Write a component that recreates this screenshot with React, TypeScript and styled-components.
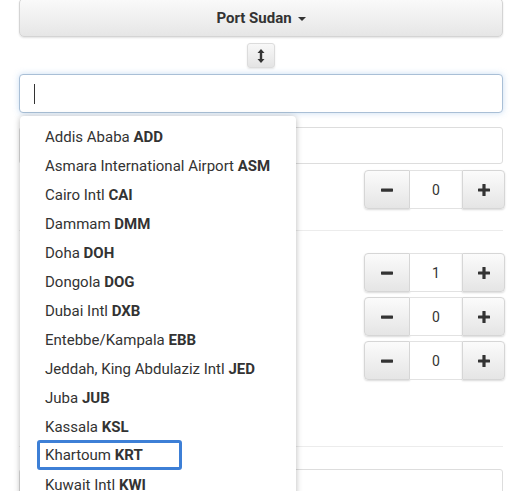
import styled, { createGlobalStyle } from "styled-components";

const GlobalStyle = createGlobalStyle`
  html, body {
    margin: 0;
    padding: 0;
    background: #fff;
    font-family: Roboto, "Liberation Sans", Arial, sans-serif;
    color: #333;
  }
  * { box-sizing: border-box; }
`;

const Page = styled.div`
  position: relative;
  width: 527px;
  height: 491px;
  overflow: hidden;
  padding: 0 24px 0 19px;
`;

const CityButton = styled.button`
  display: flex;
  align-items: center;
  justify-content: center;
  gap: 6px;
  width: 100%;
  height: 39px;
  margin-top: -2px;
  border: 1px solid #d4d4d4;
  border-radius: 5px;
  background: linear-gradient(#fafafa, #e6e6e6);
  box-shadow: 0 1px 2px rgba(0, 0, 0, 0.12);
  font-family: inherit;
  font-size: 15px;
  font-weight: 700;
  color: #333;
`;

const Caret = styled.span`
  width: 0;
  height: 0;
  border-left: 4px solid transparent;
  border-right: 4px solid transparent;
  border-top: 4px solid #333;
  margin-top: 2px;
`;

const SwapRow = styled.div`
  display: flex;
  justify-content: center;
  padding: 6px 0 6px;
`;

const SwapButton = styled.button`
  width: 28px;
  height: 25px;
  display: flex;
  align-items: center;
  justify-content: center;
  padding: 0;
  border: 1px solid #dcdcdc;
  border-radius: 3px;
  background: linear-gradient(#f8f8f8, #e4e4e4);
  box-shadow: 0 1px 2px rgba(0, 0, 0, 0.1);
`;

const SearchBox = styled.div`
  height: 39px;
  border: 1px solid #a9bfd6;
  border-radius: 4px;
  background: #fff;
  box-shadow: 0 0 6px rgba(102, 160, 220, 0.35);
  display: flex;
  align-items: center;
  padding-left: 14px;
`;

const TextCaret = styled.span`
  width: 1px;
  height: 20px;
  background: #333;
`;

const FieldBox = styled.div<{ $top: number }>`
  height: 37px;
  margin-top: ${(p) => p.$top}px;
  border: 1px solid #ddd;
  border-radius: 3px;
  background: #fff;
`;

const CounterRow = styled.div<{ $top: number }>`
  display: flex;
  justify-content: flex-end;
  margin-top: ${(p) => p.$top}px;
  margin-right: -2px;
`;

const Counter = styled.div`
  display: flex;
  height: 39px;
`;

const StepButton = styled.button<{ $side: "left" | "right" }>`
  width: ${(p) => (p.$side === "left" ? 46 : 43)}px;
  height: 100%;
  padding: 0;
  display: flex;
  align-items: center;
  justify-content: center;
  border: 1px solid #d6d6d6;
  border-radius: ${(p) => (p.$side === "left" ? "4px 0 0 4px" : "0 4px 4px 0")};
  background: linear-gradient(#fbfbfb, #e5e5e5);
  box-shadow: 0 1px 2px rgba(0, 0, 0, 0.15);
`;

const CountValue = styled.div`
  width: 52px;
  display: flex;
  align-items: center;
  justify-content: center;
  border-top: 1px solid #e2e2e2;
  border-bottom: 1px solid #e2e2e2;
  background: #fff;
  font-size: 14px;
  color: #333;
`;

const Divider = styled.div<{ $top: number }>`
  height: 1px;
  background: #ececec;
  margin-top: ${(p) => p.$top}px;
`;

const Menu = styled.ul`
  position: absolute;
  left: 20px;
  top: 116px;
  width: 276px;
  height: 390px;
  margin: 0;
  padding: 6px 0 0;
  list-style: none;
  background: #fff;
  border-radius: 4px;
  box-shadow: 0 1px 6px rgba(0, 0, 0, 0.28);
`;

const MenuItem = styled.li<{ $active?: boolean }>`
  height: 29px;
  display: flex;
  align-items: center;
  padding-left: ${(p) => (p.$active ? 17 : 25)}px;
  font-size: 15px;
  color: #333;
  white-space: nowrap;
`;

const ItemLabel = styled.span<{ $active?: boolean }>`
  display: inline-block;
  ${(p) =>
    p.$active
      ? `border: 3px solid #3d7fd6;
         border-radius: 3px;
         padding: 3px 36px 3px 5px;
         margin-top: -2px;`
      : ""}
  b {
    font-weight: 700;
  }
`;

const airports: [string, string][] = [
  ["Addis Ababa", "ADD"],
  ["Asmara International Airport", "ASM"],
  ["Cairo Intl", "CAI"],
  ["Dammam", "DMM"],
  ["Doha", "DOH"],
  ["Dongola", "DOG"],
  ["Dubai Intl", "DXB"],
  ["Entebbe/Kampala", "EBB"],
  ["Jeddah, King Abdulaziz Intl", "JED"],
  ["Juba", "JUB"],
  ["Kassala", "KSL"],
  ["Khartoum", "KRT"],
  ["Kuwait Intl", "KWI"],
];

function Minus() {
  return (
    <svg width="14" height="14" viewBox="0 0 14 14">
      <rect x="1" y="5.5" width="12" height="3.2" rx="0.6" fill="#333" />
    </svg>
  );
}

function Plus() {
  return (
    <svg width="14" height="14" viewBox="0 0 14 14">
      <rect x="1" y="5.4" width="12" height="3.2" rx="0.6" fill="#333" />
      <rect x="5.4" y="1" width="3.2" height="12" rx="0.6" fill="#333" />
    </svg>
  );
}

function Stepper({ value, top }: { value: number; top: number }) {
  return (
    <CounterRow $top={top}>
      <Counter>
        <StepButton $side="left">
          <Minus />
        </StepButton>
        <CountValue>{value}</CountValue>
        <StepButton $side="right">
          <Plus />
        </StepButton>
      </Counter>
    </CounterRow>
  );
}

export default function App() {
  return (
    <>
      <GlobalStyle />
      <Page>
        <CityButton type="button">
          Port Sudan <Caret />
        </CityButton>
        <SwapRow>
          <SwapButton type="button">
            <svg width="8" height="14" viewBox="0 0 8 14">
              <path d="M4 0 L7.5 4 H5.2 V10 H7.5 L4 14 L0.5 10 H2.8 V4 H0.5 Z" fill="#333" />
            </svg>
          </SwapButton>
        </SwapRow>
        <SearchBox>
          <TextCaret />
        </SearchBox>
        <FieldBox $top={14} />
        <Stepper value={0} top={6} />
        <Divider $top={21} />
        <Stepper value={1} top={22} />
        <Stepper value={0} top={5} />
        <Stepper value={0} top={5} />
        <Divider $top={66} />
        <FieldBox $top={22} />
        <Menu>
          {airports.map(([name, code]) => {
            const active = code === "KRT";
            return (
              <MenuItem key={code} $active={active}>
                <ItemLabel $active={active}>
                  {name} <b>{code}</b>
                </ItemLabel>
              </MenuItem>
            );
          })}
        </Menu>
      </Page>
    </>
  );
}
